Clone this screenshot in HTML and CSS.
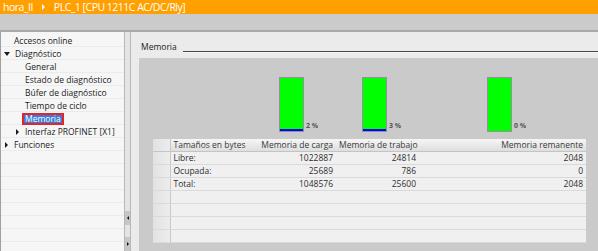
FILE: index.html
```html
<!DOCTYPE html>
<html lang="es">

<head>
    <meta charset="UTF-8">
    <title>PLC_1 - Memoria</title>
    <link rel="stylesheet" href="styles.css">
</head>

<body>

    <div class="titlebar">
        <span>hora_II</span>
        <span class="crumb-arrow"></span>
        <span>PLC_1 [CPU 1211C AC/DC/Rly]</span>
    </div>
    <div class="toolbar"></div>

    <div class="workspace">
        <!-- navigation tree -->
        <nav class="tree">
            <div class="node lvl1">Accesos online</div>
            <div class="node lvl1"><span class="twisty open"></span>Diagnóstico</div>
            <div class="node lvl2">General</div>
            <div class="node lvl2">Estado de diagnóstico</div>
            <div class="node lvl2">Búfer de diagnóstico</div>
            <div class="node lvl2">Tiempo de ciclo</div>
            <div class="node lvl2"><span class="selected">Memoria</span></div>
            <div class="node lvl2"><span class="twisty"></span>Interfaz PROFINET [X1]</div>
            <div class="node lvl1"><span class="twisty"></span>Funciones</div>
        </nav>

        <div class="splitter">
            <div class="split-btn"><span class="mini left"></span></div>
            <div class="split-btn"><span class="mini right"></span></div>
        </div>

        <main class="content">
            <div class="section-title">
                <span>Memoria</span>
                <span class="rule"></span>
            </div>

            <div class="panel">
                <div class="chart">
                    <div class="gauge">
                        <div class="bar"><div class="fill" style="height: 2px"></div></div>
                        <span class="pct">2 %</span>
                    </div>
                    <div class="gauge">
                        <div class="bar"><div class="fill" style="height: 2px"></div></div>
                        <span class="pct">3 %</span>
                    </div>
                    <div class="gauge">
                        <div class="bar"><div class="fill" style="height: 0px"></div></div>
                        <span class="pct">0 %</span>
                    </div>
                </div>

                <table class="mem-table">
                    <colgroup>
                        <col class="c-rh">
                        <col class="c-name">
                        <col class="c-load">
                        <col class="c-work">
                        <col class="c-retain">
                    </colgroup>
                    <thead>
                        <tr>
                            <th class="rh"></th>
                            <th class="name">Tamaños en bytes</th>
                            <th>Memoria de carga</th>
                            <th>Memoria de trabajo</th>
                            <th>Memoria remanente</th>
                        </tr>
                    </thead>
                    <tbody>
                        <tr>
                            <td class="rh"></td>
                            <td class="name">Libre:</td>
                            <td>1022887</td>
                            <td>24814</td>
                            <td>2048</td>
                        </tr>
                        <tr>
                            <td class="rh"></td>
                            <td class="name">Ocupada:</td>
                            <td>25689</td>
                            <td>786</td>
                            <td>0</td>
                        </tr>
                        <tr>
                            <td class="rh"></td>
                            <td class="name">Total:</td>
                            <td>1048576</td>
                            <td>25600</td>
                            <td>2048</td>
                        </tr>
                        <tr><td class="rh"></td><td></td><td></td><td></td><td></td></tr>
                        <tr><td class="rh"></td><td></td><td></td><td></td><td></td></tr>
                        <tr><td class="rh"></td><td></td><td></td><td></td><td></td></tr>
                        <tr><td class="rh"></td><td></td><td></td><td></td><td></td></tr>
                    </tbody>
                </table>
            </div>
        </main>
    </div>

</body>

</html>
```

FILE: styles.css
```css
body {
    margin: 0;
    width: 598px;
    height: 251px;
    overflow: hidden;
    background-color: #ebebeb;
    color: #333;
    font-family: "Open Sans", "Noto Sans", sans-serif;
    font-size: 8.5px;
}

/* top bars */
.titlebar {
    height: 14px;
    padding-left: 3px;
    display: flex;
    align-items: center;
    gap: 6px;
    background-color: #ffa000;
    color: white;
    font-size: 10.5px;
    letter-spacing: -0.5px;
}

.crumb-arrow {
    width: 0;
    height: 0;
    margin: 0 3px;
    border-top: 3px solid transparent;
    border-bottom: 3px solid transparent;
    border-left: 3px solid white;
}

.toolbar {
    height: 16px;
    background-color: #cbcbcb;
    border-bottom: 2px solid #a9a9a9;
}

.workspace {
    display: flex;
    height: 219px;
}

/* tree */
.tree {
    width: 124px;
    padding-top: 2px;
    border-left: 1px solid #a0a0a0;
    background-color: #f6f6f6;
    background-image: repeating-linear-gradient(to bottom, transparent 0 12px, #ebebeb 12px 13px);
    background-position: 0 2px;
}

.node {
    height: 13px;
    line-height: 13px;
    display: flex;
    align-items: center;
    white-space: nowrap;
    color: #222;
}

.lvl1 {
    padding-left: 13px;
}

.lvl2 {
    padding-left: 24px;
}

.twisty {
    width: 0;
    height: 0;
    margin-left: -9px;
    margin-right: 6px;
    border-top: 3px solid transparent;
    border-bottom: 3px solid transparent;
    border-left: 3px solid #1a1a1a;
}

.twisty.open {
    margin-left: -10px;
    margin-right: 5px;
    border-left: 3px solid transparent;
    border-right: 3px solid transparent;
    border-top: 4px solid #1a1a1a;
    border-bottom: 0;
}

.selected {
    box-sizing: border-box;
    height: 12px;
    line-height: 8px;
    margin-left: -3px;
    padding: 0 1px;
    border: 2px solid #e0262b;
    background-color: #3a7bd9;
    color: white;
}

/* splitter */
.splitter {
    width: 5px;
    display: flex;
    flex-direction: column;
    justify-content: flex-end;
    gap: 12px;
    border-left: 1px solid #b8b8b8;
    border-right: 1px solid #b8b8b8;
    background-color: #e4e4e4;
}

.split-btn {
    height: 14px;
    display: flex;
    align-items: center;
    justify-content: center;
    background-color: #c6c6c6;
}

.mini {
    width: 0;
    height: 0;
    border-top: 2px solid transparent;
    border-bottom: 2px solid transparent;
}

.mini.left {
    border-right: 2px solid #111;
}

.mini.right {
    border-left: 2px solid #111;
}

/* main area */
.content {
    flex: 1;
    display: flex;
    flex-direction: column;
}

.section-title {
    height: 26px;
    padding-left: 10px;
    display: flex;
    align-items: flex-start;
    color: #222;
}

.section-title span:first-child {
    margin-top: 9px;
    line-height: 12px;
}

.rule {
    flex: 1;
    margin: 19px 0 0 6px;
    border-top: 1px solid #444;
    border-bottom: 1px solid #f6f6f6;
}

.panel {
    flex: 1;
    margin-left: 8px;
    padding: 19px 12px 0 14px;
    background-color: #cacaca;
}

.chart {
    display: grid;
    grid-template-columns: 83px 125px 40px;
    height: 55px;
    padding-left: 126px;
}

.gauge {
    display: flex;
    align-items: flex-end;
}

.bar {
    width: 23px;
    height: 53px;
    display: flex;
    flex-direction: column;
    justify-content: flex-end;
    border: 1px solid #958fa0;
    background-color: #00ff00;
}

.fill {
    background-color: #0000ff;
}

.pct {
    margin: 0 0 2px 2px;
    font-size: 7px;
    font-weight: bold;
    color: #555;
}

/* table */
.mem-table {
    width: 433px;
    margin-top: 7px;
    border-collapse: collapse;
    table-layout: fixed;
    background-color: #f0f0f0;
}

.c-rh { width: 17px; }
.c-name { width: 85px; }
.c-load { width: 81px; }
.c-work { width: 83px; }
.c-retain { width: 167px; }

.mem-table th,
.mem-table td {
    height: 12px;
    padding: 0 3px;
    line-height: 12px;
    border-bottom: 1px solid #dadada;
    text-align: right;
    white-space: nowrap;
    font-weight: normal;
    color: #2e2e2e;
}

.mem-table th {
    background-image: linear-gradient(to bottom, #f6f6f6, #dedede);
    border-bottom: 1px solid #c4c4c4;
    color: #3a3a3a;
}

.mem-table .name {
    text-align: left;
}

.mem-table .rh {
    padding: 0;
    border-right: 1px solid #c8c8c8;
    background-image: linear-gradient(to right, #e2e2e2, #ececec);
}
```
